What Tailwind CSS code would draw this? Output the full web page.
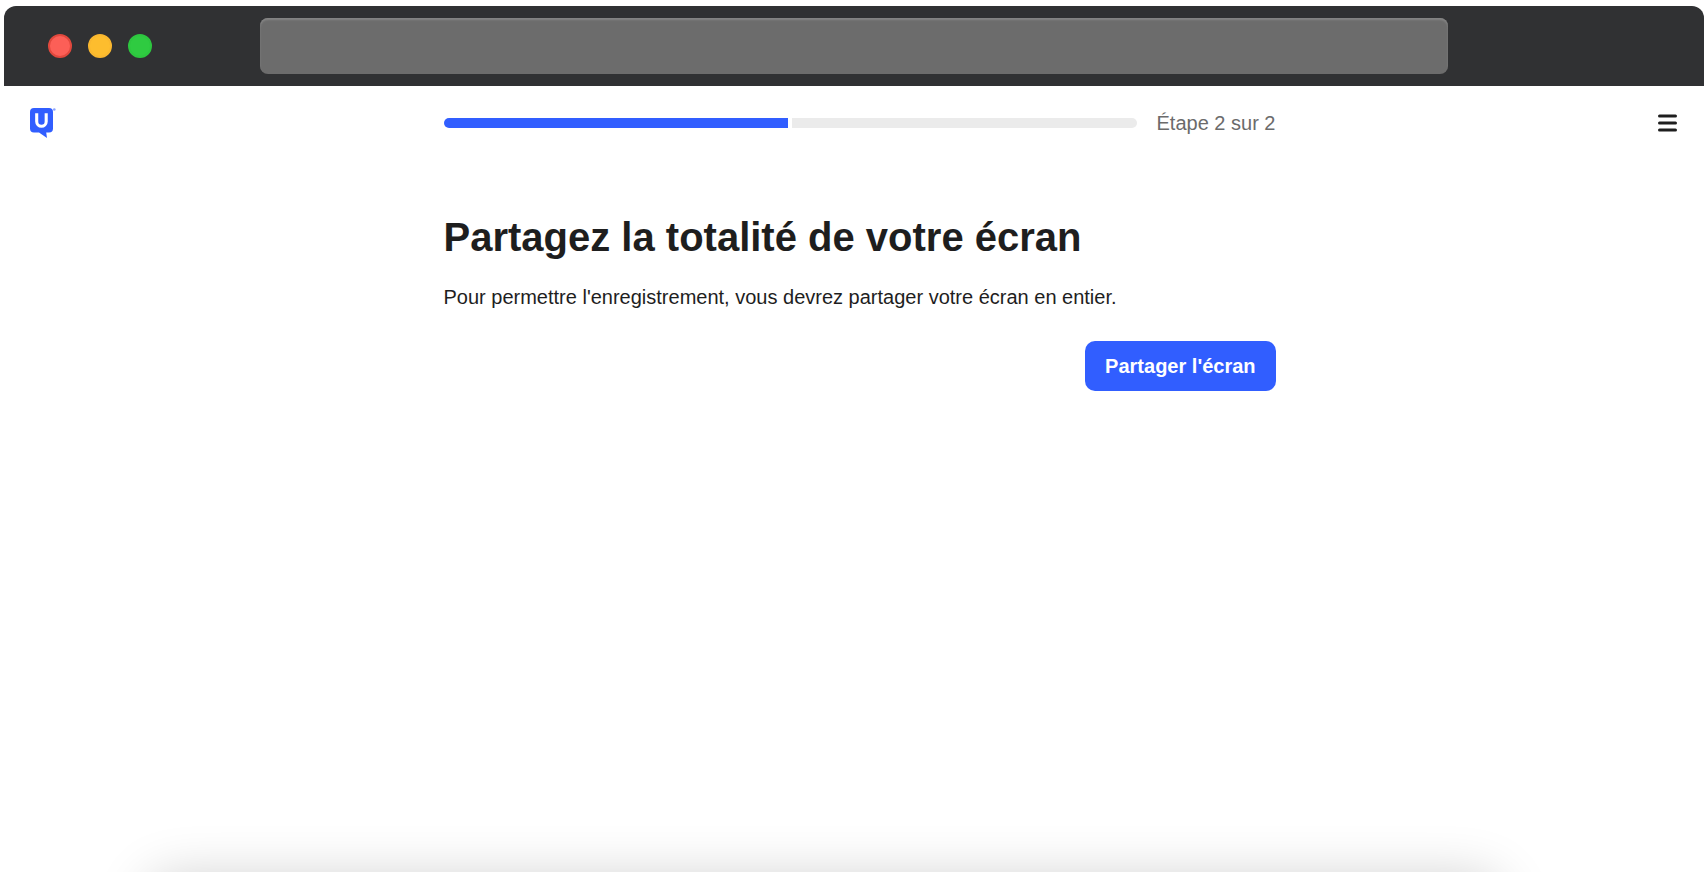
<!DOCTYPE html>
<html lang="fr">
<head>
  <meta charset="UTF-8">
  <meta name="viewport" content="width=device-width, initial-scale=1.0">
  <title>Partage d'écran</title>
  <script src="https://cdn.jsdelivr.net/npm/@tailwindcss/browser@4"></script>
</head>
<body class="bg-white min-h-screen flex flex-col px-1 py-1.5 font-['Liberation_Sans',Arial,sans-serif] text-xl text-[#1e1e1e]">

  <!-- Browser window -->
  <div class="flex-1 flex flex-col overflow-hidden rounded-t-xl">

    <!-- Title bar -->
    <div class="h-20 shrink-0 bg-[#303133] grid grid-cols-[256px_1fr_256px] items-center">
      <div class="flex gap-4 pl-11">
        <span class="size-6 rounded-full bg-[#fc5f57] border-2 border-[#e1483d]"></span>
        <span class="size-6 rounded-full bg-[#fdbd2e] border-2 border-[#f9b72f]"></span>
        <span class="size-6 rounded-full bg-[#2fcb41] border-2 border-[#2dc63f]"></span>
      </div>
      <input type="text" aria-label="Adresse" class="h-14 w-full px-4 rounded-lg bg-[#6c6c6c] text-white outline-none shadow-[inset_0_2px_2px_#858585]">
    </div>

    <!-- Header -->
    <header class="h-[74px] pl-[26px] pr-[15px] grid grid-cols-[1fr_minmax(0,832px)_1fr] items-center">
      <a href="#" aria-label="Accueil" class="justify-self-start">
        <svg class="w-[26px] h-[30px]" viewBox="0 0 26 30" fill="none" xmlns="http://www.w3.org/2000/svg">
          <path d="M4 0h15A4 4 0 0 1 23 4v16.500a4 4 0 0 1-4 4H16.200L17 30l-8-5.500H4A4 4 0 0 1 0 20.500V4A4 4 0 0 1 4 0z" fill="#315eff"/>
          <path d="M6.700 5.200v8.300a4.750 4.750 0 0 0 9.500 0V5.200" stroke="#fff" stroke-width="3.100"/>
          <circle cx="24.300" cy="1.500" r="1.300" fill="#8ba3ff"/>
        </svg>
      </a>
      <div class="flex items-center gap-5">
        <div class="flex-1 flex gap-1" role="progressbar" aria-label="Progression" aria-valuemin="0" aria-valuemax="2" aria-valuenow="1">
          <div class="flex-1 h-2.5 rounded-l-full bg-[#315eff]"></div>
          <div class="flex-1 h-2.5 rounded-r-full bg-[#ebebeb]"></div>
        </div>
        <span class="text-[#6b6b6b] leading-7">Étape 2 sur 2</span>
      </div>
      <button type="button" aria-label="Menu" class="justify-self-end p-3">
        <svg class="w-[19px] h-[18px]" viewBox="0 0 19 18" stroke="#1e1e1e" stroke-width="3" stroke-linecap="round" xmlns="http://www.w3.org/2000/svg">
          <path d="M1.500 2h16M1.500 9h16M1.500 16h16"/>
        </svg>
      </button>
    </header>

    <!-- Content -->
    <main class="flex-1 pl-[26px] pr-[15px] pt-[53px]">
      <div class="max-w-[832px] mx-auto">
        <h1 class="text-[40px] leading-12 font-bold">Partagez la totalité de votre écran</h1>
        <p class="mt-5 leading-8">Pour permettre l'enregistrement, vous devrez partager votre écran en entier.</p>
        <div class="mt-7 flex justify-end">
          <button type="button" class="h-[50px] px-5 rounded-[10px] bg-[#315eff] text-white font-bold">Partager l'écran</button>
        </div>
      </div>
    </main>

    <!-- Shadow of the panel below the fold -->
    <div class="h-0 pl-36 pr-[204px]">
      <div class="h-40 rounded-3xl bg-white shadow-[0_6px_54px_rgba(0,0,0,0.2)]"></div>
    </div>
  </div>

</body>
</html>
